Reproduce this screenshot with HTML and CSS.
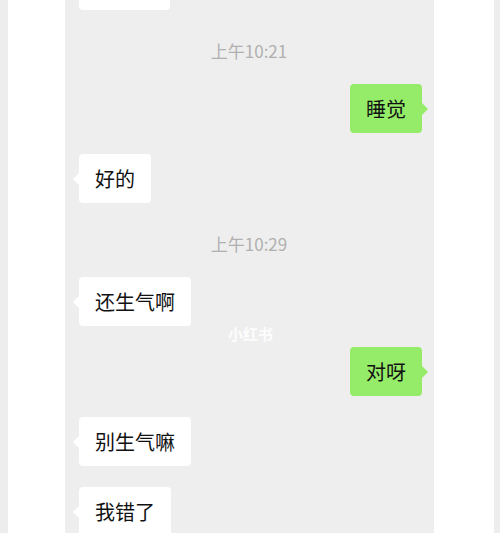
FILE: index.html
```html
<!DOCTYPE html>
<html lang="zh-CN">
<head>
  <meta charset="UTF-8">
  <meta name="viewport" content="width=device-width, initial-scale=1.0">
  <title>聊天记录</title>
  <link rel="stylesheet" href="styles.css">
</head>
<body>

<div id="screen">

  <div class="edge"></div>
  <div class="sidePanel"></div>

  <div id="chat">

    <!-- bubble scrolled off the top, only its bottom shows -->
    <div class="row left first">
      <div class="bubble blank"></div>
    </div>

    <div class="time">上午10:21</div>

    <div class="row right">
      <div class="bubble">睡觉</div>
    </div>

    <div class="row left">
      <div class="bubble">好的</div>
    </div>

    <div class="time">上午10:29</div>

    <div class="row left">
      <div class="bubble">还生气啊</div>
    </div>

    <div class="row right">
      <div class="bubble">对呀</div>
    </div>

    <div class="row left">
      <div class="bubble">别生气嘛</div>
    </div>

    <div class="row left">
      <div class="bubble">我错了</div>
    </div>

    <div id="watermark">小红书</div>

  </div>

  <div class="sidePanel rightPanel"></div>
  <div class="edge rightEdge"></div>

</div>

</body>
</html>
```

FILE: styles.css
```css
body {
  margin: 0;
  background-color: #ededed;
  font-family: "Noto Sans CJK SC", "Noto Sans", sans-serif;
}

#screen {
  display: flex;
  width: 500px;
  height: 533px;
  overflow: hidden;
}

.edge {
  width: 8px;
  background-color: #ededed;
}

.rightEdge {
  width: 6px;
}

.sidePanel {
  width: 57px;
  background-color: #ffffff;
}

.rightPanel {
  width: 60px;
}

#chat {
  position: relative;
  width: 369px;
  padding: 0 12px 0 14px;
  box-sizing: border-box;
  background-color: #eeeeee;
  display: flex;
  flex-direction: column;
}

.row {
  display: flex;
  margin-top: 21px;
}

.row.first {
  margin-top: -39px;
}

.row.right {
  justify-content: flex-end;
}

.bubble {
  position: relative;
  padding: 12px 16px;
  font-size: 20px;
  line-height: 25px;
  color: #111111;
  background-color: #ffffff;
  border-radius: 4px;
}

.bubble.blank {
  width: 59px;
  height: 25px;
}

.left .bubble::before {
  content: "";
  position: absolute;
  left: -6px;
  top: 50%;
  margin-top: -6px;
  border-top: 6px solid transparent;
  border-bottom: 6px solid transparent;
  border-right: 6px solid #ffffff;
}

.right .bubble {
  background-color: #95ec69;
}

.right .bubble::after {
  content: "";
  position: absolute;
  right: -6px;
  top: 50%;
  margin-top: -6px;
  border-top: 6px solid transparent;
  border-bottom: 6px solid transparent;
  border-left: 6px solid #95ec69;
}

.time {
  margin: 30px 0 1px;
  text-align: center;
  font-size: 17px;
  line-height: 22px;
  color: #b0b0b0;
  padding-right: 3px;
}

/* watermark sits over the chat */
#watermark {
  position: absolute;
  left: 163px;
  top: 323px;
  font-size: 15px;
  font-weight: bold;
  color: rgba(255, 255, 255, 0.9);
}
```
